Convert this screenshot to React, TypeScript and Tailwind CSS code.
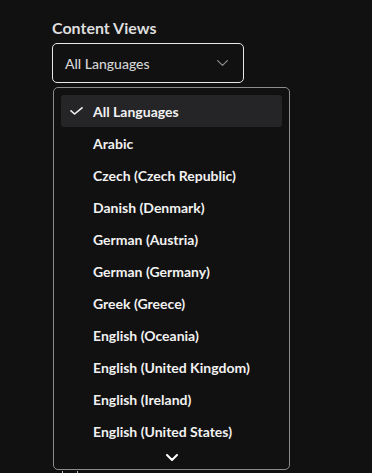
const languages = [
  "All Languages",
  "Arabic",
  "Czech (Czech Republic)",
  "Danish (Denmark)",
  "German (Austria)",
  "German (Germany)",
  "Greek (Greece)",
  "English (Oceania)",
  "English (United Kingdom)",
  "English (Ireland)",
  "English (United States)",
];

const Chevron = ({ w, h, stroke, width, color }: { w: number; h: number; stroke: number; width: number; color: string }) => (
  <svg width={w} height={h} viewBox={`0 0 ${w} ${h}`} fill="none">
    <polyline
      points={`${width / 2},${width / 2} ${w / 2},${h - width / 2} ${w - width / 2},${width / 2}`}
      stroke={color}
      strokeWidth={stroke}
      strokeLinecap="round"
      strokeLinejoin="round"
    />
  </svg>
);

const CheckMark = () => (
  <svg width="13" height="8" viewBox="0 0 13 8" fill="none">
    <polyline
      points="1,3.8 4.6,7 12,0.8"
      stroke="#f2f2f2"
      strokeWidth={1.6}
      strokeLinecap="round"
      strokeLinejoin="round"
    />
  </svg>
);

const App = () => {
  const selected = "All Languages";
  return (
    <div
      className="h-[473px] w-[372px] overflow-hidden bg-[#111111] text-[#e6e6e6]"
      style={{ fontFamily: "Lato, 'Noto Sans', sans-serif" }}
    >
      <div className="relative px-[52px] pt-[17px]">
        <h2 className="text-[16px] font-bold leading-[21px] text-[#dedede]">
          Content Views
        </h2>
        <div className="mt-[5px] flex h-[40px] w-[192px] items-center justify-between rounded-[5px] border border-[#e8e8e8] pl-[12px] pr-[15px] text-[14px] font-medium text-[#d6d6d6]">
          <span>All Languages</span>
          <Chevron w={11} h={6} stroke={1.3} width={1.3} color="#8a8a8a" />
        </div>

        <div className="mt-[388px] ml-[10px] flex h-[30px] border-l border-[#bbbbbb]">
          <div className="w-[15px] border-r border-[#bbbbbb]" />
          <div className="pl-[8px] text-[13px] leading-[16px] text-[#dddddd]">
            Czech Republic - Prague
          </div>
        </div>

        <div className="absolute left-[53px] top-[87px] h-[383px] w-[237px] rounded-[5px] border border-[#8c8c8c] bg-[#111111] px-[7px] pt-[7px]">
          <ul className="flex flex-col">
            {languages.map((lang) => (
              <li
                key={lang}
                className={
                  lang === selected
                    ? "flex h-[32px] items-center rounded-[3px] bg-[#252527] text-[14px] font-bold text-[#f2f2f2]"
                    : "flex h-[32px] items-center rounded-[3px] text-[14px] font-bold text-[#f2f2f2]"
                }
              >
                <span className="flex w-[32px] pl-[9px]">
                  {lang === selected && <CheckMark />}
                </span>
                <span>{lang}</span>
              </li>
            ))}
          </ul>
          <div className="flex justify-center pt-[7px]">
            <Chevron w={12} h={7} stroke={2} width={2} color="#ffffff" />
          </div>
        </div>
      </div>
    </div>
  );
};

export default App;
